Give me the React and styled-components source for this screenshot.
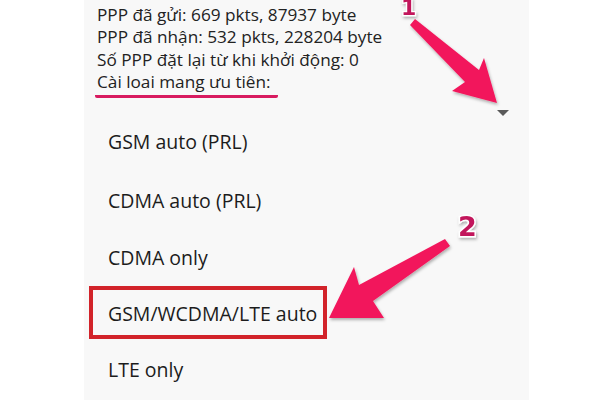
import React from "react";
import styled, { createGlobalStyle } from "styled-components";

const Global = createGlobalStyle`
  html, body { margin: 0; padding: 0; background: #ffffff; }
  body { width: 600px; height: 400px; overflow: hidden; font-family: "Open Sans", "Noto Sans", sans-serif; }
`;

const Page = styled.div`
  position: relative;
  width: 600px;
  height: 400px;
  display: flex;
  background: #ffffff;
`;

const Panel = styled.div`
  margin-left: 84px;
  width: 445px;
  height: 400px;
  background: #f8f8f8;
  display: flex;
  flex-direction: column;
  position: relative;
`;

const Info = styled.div`
  height: 101px;
  box-sizing: border-box;
  padding: 4px 0 0 13px;
  font-size: 17.2px;
  line-height: 22.3px;
  color: #222;
`;

const Line = styled.div`
  white-space: nowrap;
`;

const Heading = styled.span`
  display: inline-block;
  border-bottom: 3px solid #d81b60;
  border-radius: 2px;
  line-height: 20px;
  padding: 0 7px 3px 2px;
  margin-left: -2px;
`;

const Caret = styled.div`
  position: absolute;
  left: 413px;
  top: 110px;
  width: 0;
  height: 0;
  border-left: 6px solid transparent;
  border-right: 6px solid transparent;
  border-top: 6px solid #5a5a5a;
`;

const List = styled.div`
  margin-top: 11px;
  display: flex;
  flex-direction: column;
`;

const Option = styled.div`
  height: ${(p) => p.$h}px;
  display: flex;
  align-items: center;
  padding-left: 24px;
  font-size: 19.5px;
  color: #1c1c1c;
  position: relative;
`;

const Highlight = styled.div`
  position: absolute;
  left: 5px;
  top: 1px;
  width: 238px;
  height: 53px;
  box-sizing: border-box;
  border: 4px solid #d2232a;
`;

const Overlay = styled.svg`
  position: absolute;
  left: 0;
  top: 0;
  pointer-events: none;
`;

const options = [
  ["GSM auto (PRL)", 59],
  ["CDMA auto (PRL)", 59],
  ["CDMA only", 55],
  ["GSM/WCDMA/LTE auto", 56],
  ["LTE only", 57],
];

export default function App() {
  return (
    <Page>
      <Global />
      <Panel>
        <Info>
          <Line>PPP đã gửi: 669 pkts, 87937 byte</Line>
          <Line>PPP đã nhận: 532 pkts, 228204 byte</Line>
          <Line>Số PPP đặt lại từ khi khởi động: 0</Line>
          <Line>
            <Heading>Cài loai mang ưu tiên:</Heading>
          </Line>
        </Info>
        <Caret />
        <List>
          {options.map(([o, h], i) => (
            <Option key={o} $h={h}>
              {i === 3 && <Highlight />}
              {o}
            </Option>
          ))}
        </List>
      </Panel>
      <Overlay width="600" height="400" viewBox="0 0 600 400">
        <defs>
          <filter id="sh" x="-20%" y="-20%" width="140%" height="140%">
            <feDropShadow dx="1" dy="2" stdDeviation="1.5" floodColor="#000" floodOpacity="0.3" />
          </filter>
        </defs>
        <g filter="url(#sh)">
          <polygon
            points="410,25 415,19 479,70 484,58 497,103 452,91 465,82"
            fill="#f2185c"
          />
          <polygon
            points="445,239 450,246 373,301 384,318 329,318 354,267 359,285"
            fill="#f2185c"
          />
          <text
            x="401"
            y="15"
            fontFamily="'DejaVu Sans', sans-serif"
            fontWeight="bold"
            fontSize="22"
            fill="#c2185b"
            stroke="#ffffff"
            strokeWidth="2.5"
            paintOrder="stroke"
          >
            1
          </text>
          <text
            x="458"
            y="236"
            fontFamily="'DejaVu Sans', sans-serif"
            fontWeight="bold"
            fontSize="27"
            fill="#c2185b"
            stroke="#ffffff"
            strokeWidth="3"
            paintOrder="stroke"
          >
            2
          </text>
        </g>
      </Overlay>
    </Page>
  );
}
